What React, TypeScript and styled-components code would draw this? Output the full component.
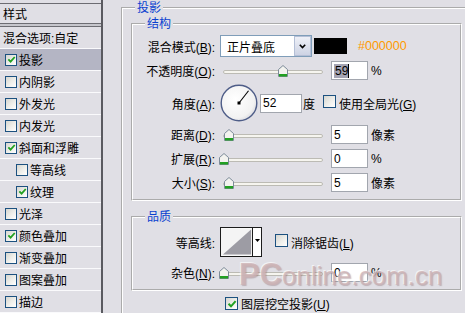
import React from "react";
import styled, { createGlobalStyle } from "styled-components";

const BG = "#e0dfe5";

const GlobalStyle = createGlobalStyle`
  * { box-sizing: border-box; }
  html, body { margin: 0; padding: 0; overflow: hidden; background: ${BG}; }
  body {
    font-family: "Liberation Sans", "Noto Sans CJK SC", sans-serif;
    font-size: 12px;
    color: #000;
  }
`;

const Dialog = styled.div`
  position: relative;
  display: flex;
  width: 465px;
  height: 313px;
  overflow: hidden;
  background: ${BG};
`;

/* ---------- sidebar ---------- */
const Sidebar = styled.div`
  flex: none;
  width: 103px;
  padding-top: 3px;
  border-right: 2px solid #5a5a60;
  display: flex;
  flex-direction: column;
`;

const SideHeader = styled.div`
  height: 22px;
  border-top: 1px solid #6c6c72;
  display: flex;
  align-items: center;
  padding-left: 3px;
`;

const SideDivider = styled.div`
  height: 4px;
  border-top: 1px solid #6c6c72;
  border-bottom: 1px solid #6c6c72;
  background: #c6c6cc;
`;

const SideItem = styled.div<{ $indent?: number; $selected?: boolean }>`
  flex: none;
  height: 22px;
  border-bottom: 1px solid #fafafc;
  display: flex;
  align-items: center;
  gap: 2px;
  padding-left: ${(p) => p.$indent ?? 5}px;
  background: ${(p) => (p.$selected ? "#b4b5c4" : "transparent")};
  white-space: nowrap;
`;

/* ---------- checkbox ---------- */
const Box = styled.span<{ $size: number }>`
  flex: none;
  width: ${(p) => p.$size}px;
  height: ${(p) => p.$size}px;
  border: 1px solid #1c5180;
  background: linear-gradient(135deg, #d6d6d0 0%, #efefeb 55%, #ffffff 100%);
  display: inline-flex;
  align-items: center;
  justify-content: center;
`;

function CheckBox({ checked, size = 13 }: { checked?: boolean; size?: number }) {
  return (
    <Box $size={size}>
      {checked && (
        <svg width={size - 3} height={size - 3} viewBox="0 0 10 10">
          <path d="M1.5 4.8 L4 7.3 L8.6 2.2" stroke="#21a121" strokeWidth="2" fill="none" />
        </svg>
      )}
    </Box>
  );
}

/* ---------- main area ---------- */
const Main = styled.div`
  flex: 1;
  min-width: 0;
  padding-left: 18px;
`;

const OuterGroup = styled.fieldset`
  margin: 0;
  min-width: 0;
  width: 360px;
  padding: 0 0 30px 8px;
  border: 2px groove #fff;
`;

const Section = styled.fieldset<{ $mt?: number; $pt: number }>`
  margin: ${(p) => p.$mt ?? 0}px 0 0 0;
  min-width: 0;
  width: 331px;
  padding: ${(p) => p.$pt}px 0 7px 0;
  border: 2px groove #fff;
`;

const Legend = styled.legend<{ $ml: number }>`
  padding: 0 2px;
  margin-left: ${(p) => p.$ml}px;
  color: #0a3fd0;
  font-size: 12px;
  line-height: 16px;
`;

const Row = styled.div<{ $h: number; $mt?: number }>`
  display: flex;
  align-items: center;
  height: ${(p) => p.$h}px;
  margin-top: ${(p) => p.$mt ?? 0}px;
  white-space: nowrap;
`;

const Label = styled.span`
  flex: none;
  width: 82px;
  margin-right: 5px;
  text-align: right;
`;

const Unit = styled.span<{ $ml?: number }>`
  margin-left: ${(p) => p.$ml ?? 3}px;
`;

const TextBox = styled.div<{ $w: number }>`
  flex: none;
  width: ${(p) => p.$w}px;
  height: 19px;
  border: 1px solid #a2a6ae;
  background: #fff;
  display: flex;
  align-items: center;
  padding-left: 2px;
  margin-left: ${(p) => (p.$w > 40 ? 2 : 8)}px;
`;

const Selected = styled.span`
  background: #a4a4b3;
  line-height: 14px;
  padding: 0 0 0 1px;
`;

const Caret = styled.span`
  width: 1px;
  height: 14px;
  background: #000;
`;

/* select */
const Select = styled.div`
  flex: none;
  width: 92px;
  height: 22px;
  border: 1px solid #7f9db9;
  background: #fff;
  display: flex;
  align-items: center;
  padding-left: 6px;
`;

const SelectText = styled.span`
  flex: 1;
`;

const SelectButton = styled.span`
  flex: none;
  width: 17px;
  height: 20px;
  border: 1px solid #b4bfd6;
  background: linear-gradient(#eef0f7, #cdd3e4);
  display: flex;
  align-items: center;
  justify-content: center;
`;

const Swatch = styled.span`
  flex: none;
  width: 33px;
  height: 16px;
  margin-left: 2px;
  background: #000;
`;

const Hex = styled.span`
  margin-left: 11px;
  color: #ff9a00;
  font-size: 12.5px;
`;

/* slider */
const Track = styled.div`
  position: relative;
  flex: none;
  width: 100px;
  height: 4px;
  margin: 3px 0 0 3px;
  border: 1px solid #bcbbb4;
  border-radius: 2px;
  background: #f6f5ef;
`;

const ThumbSvg = styled.svg`
  position: absolute;
  top: -6px;
`;

function Slider({ value }: { value: number }) {
  return (
    <Track>
      <ThumbSvg width="10" height="12" viewBox="0 0 10 12" style={{ left: value - 5 }}>
        <path d="M0.5 4.5 L5 0.5 L9.5 4.5 V11.5 H0.5 Z" fill="#f3f3ef" stroke="#7c8b99" />
        <rect x="1" y="9" width="8" height="2.5" fill="#22a022" />
      </ThumbSvg>
    </Track>
  );
}

/* dial */
const DialSvg = styled.svg`
  flex: none;
`;

function Dial({ angle }: { angle: number }) {
  const r = (angle * Math.PI) / 180;
  const x2 = 19 + 15.5 * Math.cos(r);
  const y2 = 19 - 15.5 * Math.sin(r);
  return (
    <DialSvg width="38" height="38" viewBox="0 0 38 38">
      <defs>
        <radialGradient id="dialFill" cx="40%" cy="40%" r="65%">
          <stop offset="0%" stopColor="#ffffff" />
          <stop offset="80%" stopColor="#f2f2f2" />
          <stop offset="100%" stopColor="#d9d9de" />
        </radialGradient>
      </defs>
      <circle cx="19" cy="19" r="17.8" fill="url(#dialFill)" stroke="#4e5d88" strokeWidth="1.4" />
      <line x1="19" y1="19" x2={x2} y2={y2} stroke="#000" strokeWidth="1.1" />
      <rect x="17.5" y="17.5" width="3" height="3" fill="#000" />
    </DialSvg>
  );
}

/* contour picker */
const ContourPicker = styled.div`
  flex: none;
  display: flex;
  width: 42px;
  height: 30px;
  border: 1px solid #1c1c1c;
  background: #fff;
`;

const ContourSwatch = styled.svg`
  flex: none;
  border-right: 1px solid #1c1c1c;
`;

const ContourArrow = styled.span`
  flex: 1;
  display: flex;
  justify-content: center;
  padding-top: 11px;
`;

const CheckLabel = styled.span`
  margin-left: 3px;
`;

const BottomRow = styled.div`
  display: flex;
  align-items: center;
  height: 15px;
  margin-top: 5px;
  padding-left: 94px;
  white-space: nowrap;
`;

const Watermark = styled.div`
  position: absolute;
  left: 239px;
  top: 257px;
  white-space: nowrap;
  color: rgba(205, 178, 180, 0.78);
  text-shadow: 1px 1px 1px rgba(125, 92, 96, 0.35), -1px -1px 0 rgba(255, 255, 255, 0.6);
  font-family: "Liberation Sans", Arial, sans-serif;
  pointer-events: none;
`;

const WmBig = styled.span`
  font-size: 31px;
  font-weight: bold;
`;

const WmSmall = styled.span`
  font-size: 26px;
`;

const sideItems: { label: string; checked?: boolean; indent?: number; selected?: boolean }[] = [
  { label: "投影", checked: true, selected: true },
  { label: "内阴影" },
  { label: "外发光" },
  { label: "内发光" },
  { label: "斜面和浮雕", checked: true },
  { label: "等高线", indent: 16 },
  { label: "纹理", indent: 16, checked: true },
  { label: "光泽" },
  { label: "颜色叠加", checked: true },
  { label: "渐变叠加" },
  { label: "图案叠加" },
  { label: "描边" },
];

export default function App() {
  return (
    <Dialog>
      <GlobalStyle />
      <Sidebar>
        <SideHeader>样式</SideHeader>
        <SideDivider />
        <SideItem $indent={3}>混合选项:自定</SideItem>
        {sideItems.map((it) => (
          <SideItem key={it.label} $indent={it.indent} $selected={it.selected}>
            <CheckBox checked={it.checked} size={12} />
            <span>{it.label}</span>
          </SideItem>
        ))}
      </Sidebar>

      <Main>
        <OuterGroup>
          <Legend $ml={4}>投影</Legend>

          <Section $pt={3}>
            <Legend $ml={12}>结构</Legend>

            <Row $h={22}>
              <Label>
                混合模式(<u>B</u>):
              </Label>
              <Select>
                <SelectText>正片叠底</SelectText>
                <SelectButton>
                  <svg width="7" height="5" viewBox="0 0 7 5">
                    <path d="M0.8 0.8 L3.5 3.6 L6.2 0.8" stroke="#000" strokeWidth="1.6" fill="none" />
                  </svg>
                </SelectButton>
              </Select>
              <Swatch />
              <Hex>#000000</Hex>
            </Row>

            <Row $h={19} $mt={4}>
              <Label>
                不透明度(<u>O</u>):
              </Label>
              <Slider value={59} />
              <TextBox $w={37}>
                <Selected>59</Selected>
                <Caret />
              </TextBox>
              <Unit>%</Unit>
            </Row>

            <Row $h={38} $mt={4}>
              <Label>
                角度(<u>A</u>):
              </Label>
              <Dial angle={52} />
              <TextBox $w={42}>52</TextBox>
              <Unit $ml={1}>度</Unit>
              <Unit $ml={8}>
                <CheckBox />
              </Unit>
              <CheckLabel>
                使用全局光(<u>G</u>)
              </CheckLabel>
            </Row>

            <Row $h={19} $mt={3}>
              <Label>
                距离(<u>D</u>):
              </Label>
              <Slider value={5} />
              <TextBox $w={37}>5</TextBox>
              <Unit>像素</Unit>
            </Row>

            <Row $h={19} $mt={5}>
              <Label>
                扩展(<u>R</u>):
              </Label>
              <Slider value={0} />
              <TextBox $w={37}>0</TextBox>
              <Unit>%</Unit>
            </Row>

            <Row $h={19} $mt={5}>
              <Label>
                大小(<u>S</u>):
              </Label>
              <Slider value={5} />
              <TextBox $w={37}>5</TextBox>
              <Unit>像素</Unit>
            </Row>
          </Section>

          <Section $mt={8} $pt={2}>
            <Legend $ml={12}>品质</Legend>

            <Row $h={30}>
              <Label>等高线:</Label>
              <ContourPicker>
                <ContourSwatch width="32" height="28" viewBox="0 0 32 28">
                  <rect x="0" y="0" width="32" height="28" fill="#f4f4f4" />
                  <polygon points="2,27 31,1 31,27" fill="#9d9ca4" />
                </ContourSwatch>
                <ContourArrow>
                  <svg width="5" height="3" viewBox="0 0 5 3">
                    <polygon points="0,0 5,0 2.5,3" fill="#000" />
                  </svg>
                </ContourArrow>
              </ContourPicker>
              <Unit $ml={13}>
                <CheckBox />
              </Unit>
              <CheckLabel>
                消除锯齿(<u>L</u>)
              </CheckLabel>
            </Row>

            <Row $h={19} $mt={6}>
              <Label>
                杂色(<u>N</u>):
              </Label>
              <Slider value={0} />
              <TextBox $w={37}>0</TextBox>
              <Unit>%</Unit>
            </Row>
          </Section>

          <BottomRow>
            <CheckBox checked />
            <CheckLabel>
              图层挖空投影(<u>U</u>)
            </CheckLabel>
          </BottomRow>
        </OuterGroup>
      </Main>

      <Watermark>
        <WmBig>PC</WmBig>
        <WmSmall>online.com.cn</WmSmall>
      </Watermark>
    </Dialog>
  );
}
